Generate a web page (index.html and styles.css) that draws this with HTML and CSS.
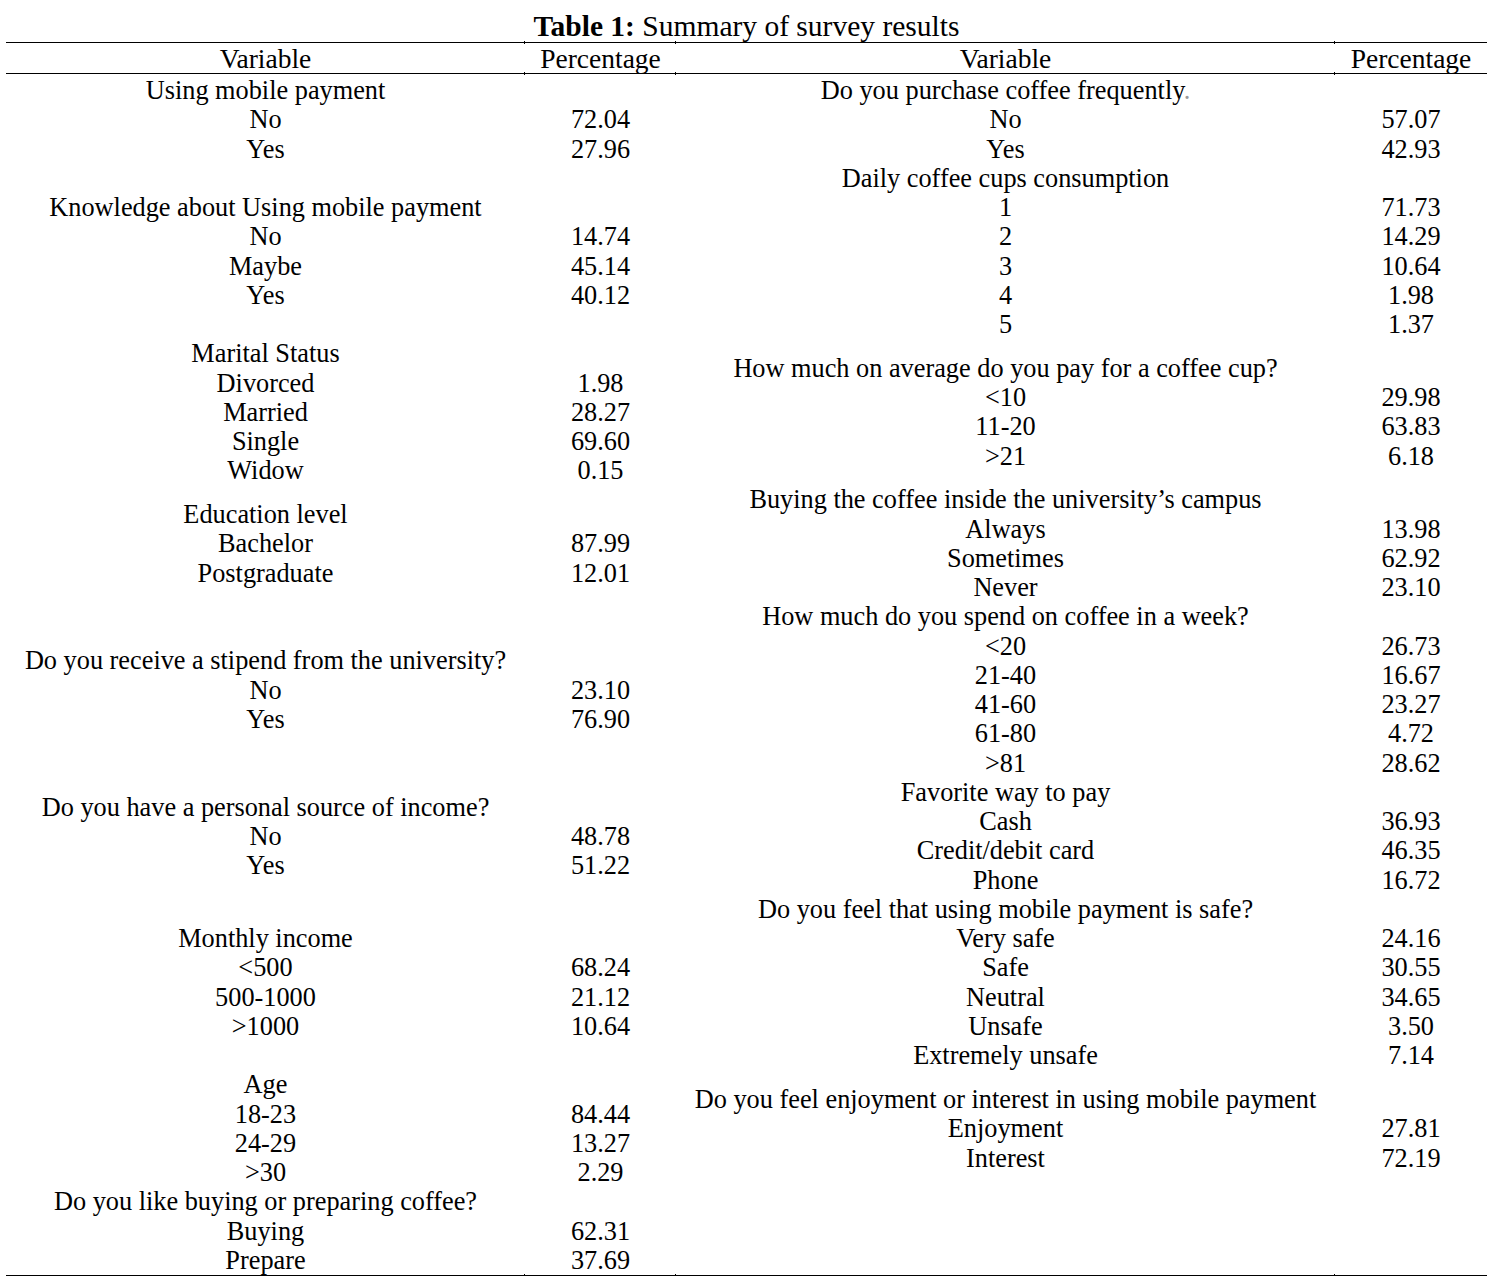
FILE: index.html
```html
<!DOCTYPE html>
<html>
<head>
<meta charset="utf-8">
<link rel="stylesheet" href="styles.css">
</head>
<body>
<div class="page">
  <div class="title"><b>Table 1:</b> Summary of survey results</div>
  <div class="head">
    <div class="th">Variable</div>
    <div class="th tick">Percentage</div>
    <div class="th tick">Variable</div>
    <div class="th tick">Percentage</div>
  </div>
  <div class="body">
    <div class="half left">
      <div class="row"><span>Using mobile payment</span><span></span></div>
      <div class="row"><span>No</span><span>72.04</span></div>
      <div class="row"><span>Yes</span><span>27.96</span></div>
      <div class="row g1"><span>Knowledge about Using mobile payment</span><span></span></div>
      <div class="row"><span>No</span><span>14.74</span></div>
      <div class="row"><span>Maybe</span><span>45.14</span></div>
      <div class="row"><span>Yes</span><span>40.12</span></div>
      <div class="row g1"><span>Marital Status</span><span></span></div>
      <div class="row"><span>Divorced</span><span>1.98</span></div>
      <div class="row"><span>Married</span><span>28.27</span></div>
      <div class="row"><span>Single</span><span>69.60</span></div>
      <div class="row"><span>Widow</span><span>0.15</span></div>
      <div class="row gh"><span>Education level</span><span></span></div>
      <div class="row"><span>Bachelor</span><span>87.99</span></div>
      <div class="row"><span>Postgraduate</span><span>12.01</span></div>
      <div class="row g2"><span>Do you receive a stipend from the university?</span><span></span></div>
      <div class="row"><span>No</span><span>23.10</span></div>
      <div class="row"><span>Yes</span><span>76.90</span></div>
      <div class="row g2"><span>Do you have a personal source of income?</span><span></span></div>
      <div class="row"><span>No</span><span>48.78</span></div>
      <div class="row"><span>Yes</span><span>51.22</span></div>
      <div class="row g15"><span>Monthly income</span><span></span></div>
      <div class="row"><span>&lt;500</span><span>68.24</span></div>
      <div class="row"><span>500-1000</span><span>21.12</span></div>
      <div class="row"><span>&gt;1000</span><span>10.64</span></div>
      <div class="row g1"><span>Age</span><span></span></div>
      <div class="row"><span>18-23</span><span>84.44</span></div>
      <div class="row"><span>24-29</span><span>13.27</span></div>
      <div class="row"><span>&gt;30</span><span>2.29</span></div>
      <div class="row"><span>Do you like buying or preparing coffee?</span><span></span></div>
      <div class="row"><span>Buying</span><span>62.31</span></div>
      <div class="row"><span>Prepare</span><span>37.69</span></div>
    </div>
    <div class="half right">
      <div class="row"><span>Do you purchase coffee frequently<span class="faint">.</span></span><span></span></div>
      <div class="row"><span>No</span><span>57.07</span></div>
      <div class="row"><span>Yes</span><span>42.93</span></div>
      <div class="row"><span>Daily coffee cups consumption</span><span></span></div>
      <div class="row"><span>1</span><span>71.73</span></div>
      <div class="row"><span>2</span><span>14.29</span></div>
      <div class="row"><span>3</span><span>10.64</span></div>
      <div class="row"><span>4</span><span>1.98</span></div>
      <div class="row"><span>5</span><span>1.37</span></div>
      <div class="row gh"><span>How much on average do you pay for a coffee cup?</span><span></span></div>
      <div class="row"><span>&lt;10</span><span>29.98</span></div>
      <div class="row"><span>11-20</span><span>63.83</span></div>
      <div class="row"><span>&gt;21</span><span>6.18</span></div>
      <div class="row gh"><span>Buying the coffee inside the university’s campus</span><span></span></div>
      <div class="row"><span>Always</span><span>13.98</span></div>
      <div class="row"><span>Sometimes</span><span>62.92</span></div>
      <div class="row"><span>Never</span><span>23.10</span></div>
      <div class="row"><span>How much do you spend on coffee in a week?</span><span></span></div>
      <div class="row"><span>&lt;20</span><span>26.73</span></div>
      <div class="row"><span>21-40</span><span>16.67</span></div>
      <div class="row"><span>41-60</span><span>23.27</span></div>
      <div class="row"><span>61-80</span><span>4.72</span></div>
      <div class="row"><span>&gt;81</span><span>28.62</span></div>
      <div class="row"><span>Favorite way to pay</span><span></span></div>
      <div class="row"><span>Cash</span><span>36.93</span></div>
      <div class="row"><span>Credit/debit card</span><span>46.35</span></div>
      <div class="row"><span>Phone</span><span>16.72</span></div>
      <div class="row"><span>Do you feel that using mobile payment is safe?</span><span></span></div>
      <div class="row"><span>Very safe</span><span>24.16</span></div>
      <div class="row"><span>Safe</span><span>30.55</span></div>
      <div class="row"><span>Neutral</span><span>34.65</span></div>
      <div class="row"><span>Unsafe</span><span>3.50</span></div>
      <div class="row"><span>Extremely unsafe</span><span>7.14</span></div>
      <div class="row gh"><span>Do you feel enjoyment or interest in using mobile payment</span><span></span></div>
      <div class="row"><span>Enjoyment</span><span>27.81</span></div>
      <div class="row"><span>Interest</span><span>72.19</span></div>
    </div>
    <i class="btick t1"></i><i class="btick t2"></i><i class="btick t3"></i>
  </div>
</div>
</body>
</html>
```

FILE: styles.css
```css
html, body {
  margin: 0;
  padding: 0;
  background: #fff;
}
body {
  font-family: "Liberation Serif", "Times New Roman", serif;
  font-size: 26.3px;
  color: #000;
}
.page {
  padding: 11px 5px 0 6px;
  width: 1481px;
}
.title {
  text-align: center;
  font-size: 29.5px;
  line-height: 30px;
  height: 31px;
}
.head {
  display: grid;
  grid-template-columns: 519px 151px 659px 152px;
  border-top: 1px solid #000;
  border-bottom: 1px solid #000;
  height: 30px;
}
.th {
  position: relative;
  text-align: center;
  font-size: 27.5px;
  line-height: 30px;
  padding-top: 1px;
  box-sizing: border-box;
  height: 30px;
}
.th.tick::before,
.th.tick::after {
  content: "";
  position: absolute;
  left: -1px;
  width: 1px;
  height: 3px;
  background: #000;
}
.th.tick::before { top: -2px; }
.th.tick::after { bottom: -2px; }
.body {
  position: relative;
  display: grid;
  grid-template-columns: 670px 811px;
  border-bottom: 1px solid #000;
  padding-top: 2px;
  height: 1199px;
}
.half {
  display: flex;
  flex-direction: column;
}
.row {
  display: grid;
  line-height: 29.25px;
  height: 29.25px;
  text-align: center;
  white-space: nowrap;
}
.left .row { grid-template-columns: 519px 151px; }
.right .row { grid-template-columns: 659px 152px; }
.gh { margin-top: 14.6px; }
.g1 { margin-top: 29.25px; }
.g15 { margin-top: 43.9px; }
.g2 { margin-top: 58.5px; }
.faint { color: #9a9a9a; }
.btick {
  position: absolute;
  bottom: -2px;
  width: 1px;
  height: 3px;
  background: #000;
}
.t1 { left: 518px; }
.t2 { left: 669px; }
.t3 { left: 1328px; }
```
